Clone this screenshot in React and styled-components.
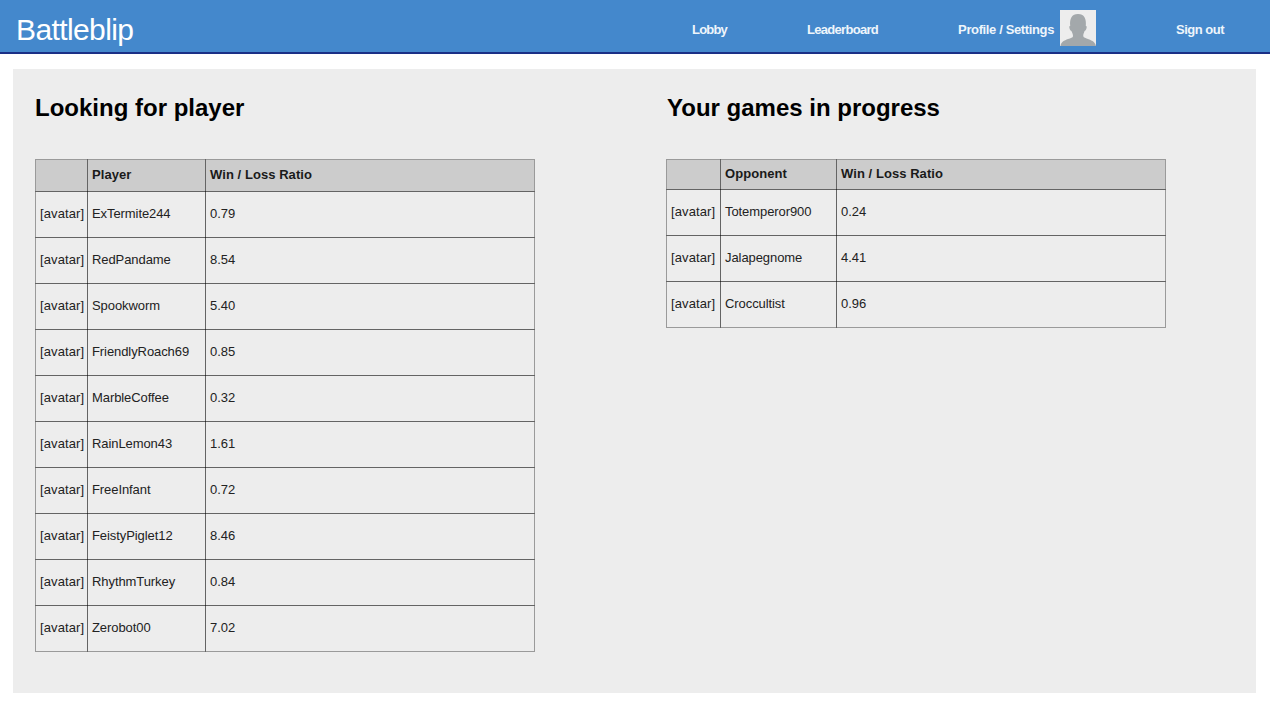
import React from "react";
import styled, { createGlobalStyle } from "styled-components";

const GlobalStyle = createGlobalStyle`
  *, *::before, *::after { box-sizing: border-box; }
  body {
    margin: 0;
    background: #fff;
    color: #000;
    font-family: "Liberation Sans", Arial, sans-serif;
  }
`;

const Header = styled.header`
  display: flex;
  align-items: center;
  justify-content: space-between;
  height: 54px;
  padding: 4px 46px 0 16px;
  background: #4488cc;
  border-bottom: 2px solid #1a2f86;
`;

const Logo = styled.a`
  padding-top: 4px;
  font-size: 30px;
  line-height: 36px;
  letter-spacing: -0.6px;
  color: #fff;
`;

const Nav = styled.nav`
  display: flex;
  align-items: center;
  gap: 80px;
`;

const NavLink = styled.a`
  display: flex;
  align-items: center;
  height: 36px;
  color: #eef5fb;
  font-size: 13px;
  font-weight: bold;
  letter-spacing: ${(p) => p.$tracking};
  white-space: nowrap;
`;

const NavText = styled.span`
  padding-top: 2px;
`;

const Avatar = styled.svg`
  display: block;
  width: 36px;
  height: 36px;
  margin-left: 6px;
`;

const Panel = styled.main`
  display: grid;
  grid-template-columns: 631px 1fr;
  align-items: start;
  width: 1243px;
  height: 624px;
  margin: 15px 0 0 13px;
  padding: 25px 22px 0;
  background: #ededed;
`;

const Title = styled.h2`
  margin: 0 0 37px;
  padding-left: ${(p) => p.$inset || "0"};
  font-size: 24px;
  line-height: 28px;
  font-weight: bold;
`;

const Table = styled.div`
  display: grid;
  grid-template-columns: ${(p) => p.$columns};
  grid-template-rows: ${(p) => p.$head} repeat(${(p) => p.$rows}, 46px);
  width: 500px;
  padding: 0 1px 1px 0;
`;

const Cell = styled.div`
  display: flex;
  align-items: center;
  margin: 0 -1px -1px 0;
  padding: 0 0 2px 4px;
  border: 1px solid rgba(0, 0, 0, 0.35);
  font-size: 13px;
  letter-spacing: ${(p) => p.$tracking || "0"};
  color: #222;
  white-space: nowrap;
`;

const HeadCell = styled(Cell)`
  padding-bottom: 3px;
  background: #ccc;
  background-clip: padding-box;
  font-weight: bold;
  letter-spacing: 0.06px;
  color: #1a1a1a;
`;

const looking = [
  ["ExTermite244", "0.79"],
  ["RedPandame", "8.54"],
  ["Spookworm", "5.40"],
  ["FriendlyRoach69", "0.85"],
  ["MarbleCoffee", "0.32"],
  ["RainLemon43", "1.61"],
  ["FreeInfant", "0.72"],
  ["FeistyPiglet12", "8.46"],
  ["RhythmTurkey", "0.84"],
  ["Zerobot00", "7.02"],
];

const inProgress = [
  ["Totemperor900", "0.24"],
  ["Jalapegnome", "4.41"],
  ["Croccultist", "0.96"],
];

function GameTable({ columns, head, label, players }) {
  return (
    <Table $columns={columns} $head={head} $rows={players.length}>
      <HeadCell />
      <HeadCell>{label}</HeadCell>
      <HeadCell>Win / Loss Ratio</HeadCell>
      {players.map(([name, ratio]) => (
        <React.Fragment key={name}>
          <Cell $tracking="0.1px">[avatar]</Cell>
          <Cell $tracking="-0.08px">{name}</Cell>
          <Cell>{ratio}</Cell>
        </React.Fragment>
      ))}
    </Table>
  );
}

export default function App() {
  return (
    <>
      <GlobalStyle />
      <Header>
        <Logo>Battleblip</Logo>
        <Nav>
          <NavLink $tracking="-0.8px">
            <NavText>Lobby</NavText>
          </NavLink>
          <NavLink $tracking="-0.7px">
            <NavText>Leaderboard</NavText>
          </NavLink>
          <NavLink $tracking="-0.37px">
            <NavText>Profile / Settings</NavText>
            <Avatar viewBox="0 0 36 36">
              <rect width="36" height="36" fill="#ededed" />
              <path
                d="M0.5 36C0.8 32.2 4.2 30.4 8 29C10.8 28 12.8 27.6 13 26.2C13.1 24.8 12.4 23 11.4 21C10.2 20.6 9.4 18.6 9.3 17C9.3 16.2 9.7 16 10.2 16C9.5 8.5 11.8 4 18 4C24.2 4 26.5 8.5 25.8 16C26.3 16 26.7 16.2 26.7 17C26.6 18.6 25.8 20.6 24.6 21C23.8 23 23.1 24.8 23.3 26.2C23.6 27.6 25.8 28.1 28.6 29.2C32.5 30.6 35.4 32.4 36 36Z"
                fill="#a3a8ab"
              />
            </Avatar>
          </NavLink>
          <NavLink $tracking="-0.5px">
            <NavText>Sign out</NavText>
          </NavLink>
        </Nav>
      </Header>
      <Panel>
        <section>
          <Title>Looking for player</Title>
          <GameTable columns="52px 118px 329px" head="32px" label="Player" players={looking} />
        </section>
        <section>
          <Title $inset="1px">Your games in progress</Title>
          <GameTable columns="54px 116px 329px" head="30px" label="Opponent" players={inProgress} />
        </section>
      </Panel>
    </>
  );
}
